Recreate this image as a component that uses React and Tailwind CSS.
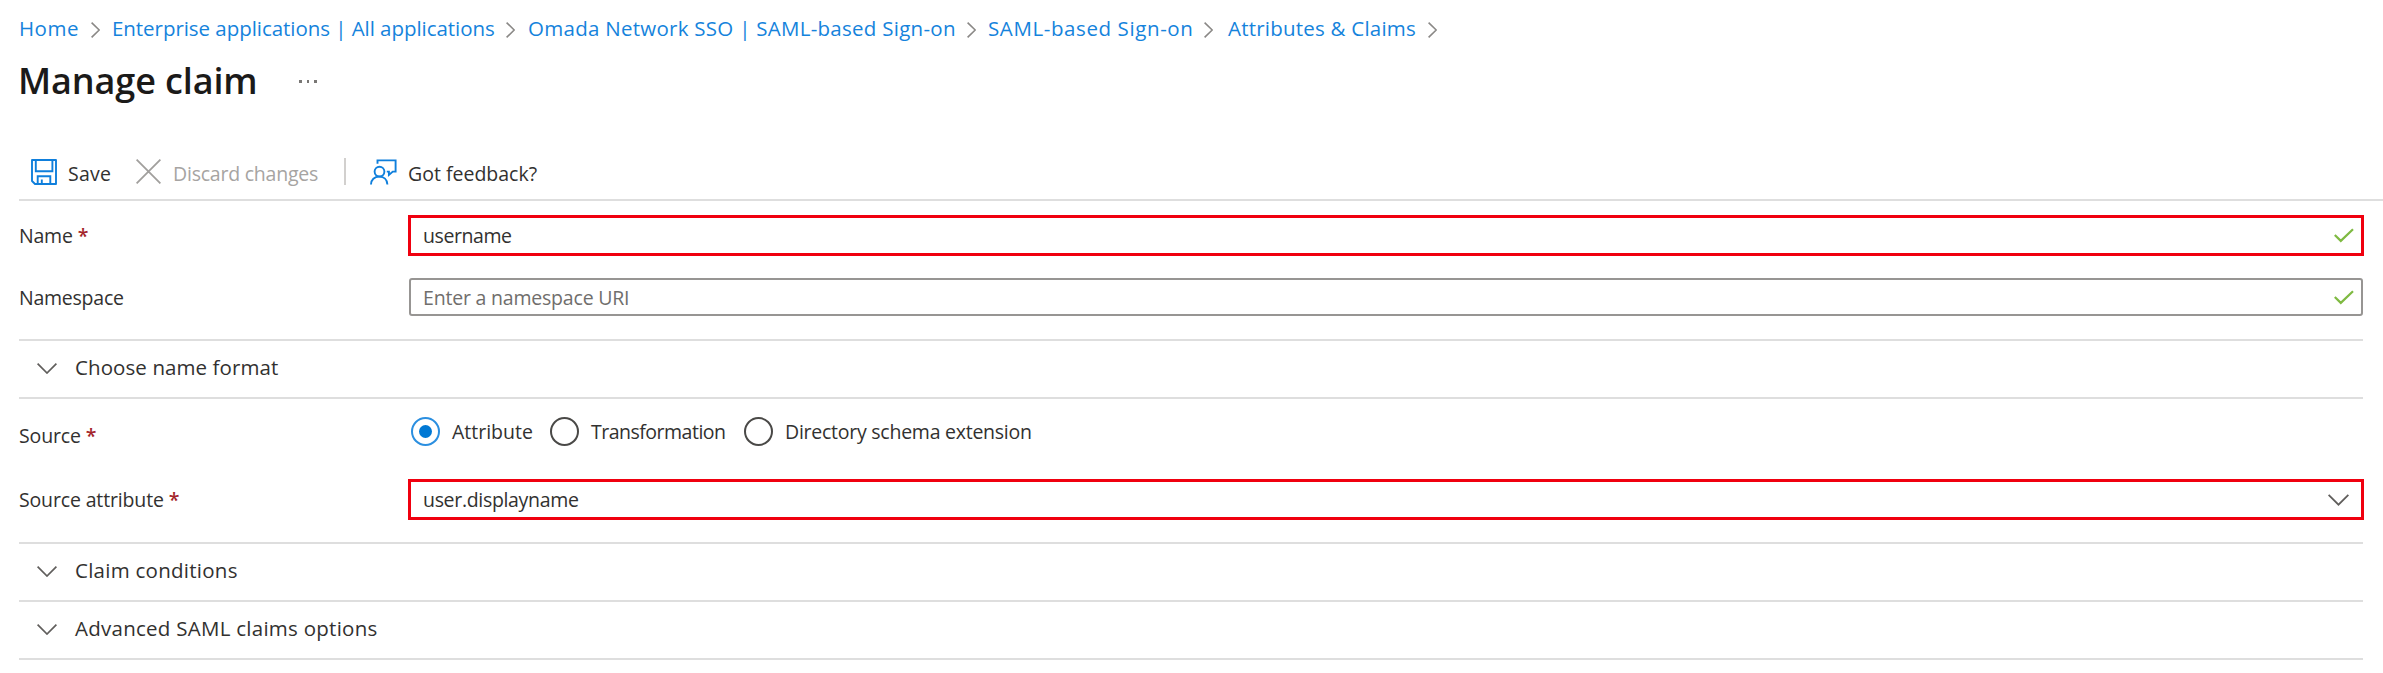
import React from 'react'

const breadcrumbs = [
    { label: 'Home', className: 'w-[59px] tracking-[0.5px]' },
    {
        label: 'Enterprise applications | All applications',
        className: 'w-[381px] tracking-[-0.05px]',
    },
    {
        label: 'Omada Network SSO | SAML-based Sign-on',
        className: 'w-[427px] pl-px tracking-[0.27px]',
    },
    { label: 'SAML-based Sign-on', className: 'w-[203px] tracking-[0.6px]' },
    {
        label: 'Attributes & Claims',
        className: 'w-[190px] pl-[3px] tracking-[0.22px]',
    },
]

const sources = [
    {
        label: 'Attribute',
        className: 'w-[98px] tracking-[0px]',
        checked: true,
    },
    { label: 'Transformation', className: 'w-[153px] tracking-[-0.5px]' },
    {
        label: 'Directory schema extension',
        className: 'tracking-[-0.25px]',
    },
]

const Chevron = ({ className }) => (
    <svg
        className={className}
        viewBox="0 0 20 11"
        fill="none"
        stroke="currentColor"
        strokeWidth="1.7"
    >
        <path d="M0.6 0.7L10 10L19.4 0.7" />
    </svg>
)

const Check = () => (
    <svg
        className="h-[15px] w-[20px] text-[#7fba42]"
        viewBox="0 0 20 15"
        fill="none"
        stroke="currentColor"
        strokeWidth="2.2"
    >
        <path d="M0.8 7L6.8 12.9L19 1.2" />
    </svg>
)

const SaveIcon = () => (
    <svg
        className="h-[26px] w-[26px] text-[#0f7fdc]"
        viewBox="0 0 26 26"
        fill="none"
        stroke="currentColor"
        strokeWidth="1.9"
    >
        <path d="M1 1H25V25H4L1 22Z" strokeLinejoin="round" />
        <path d="M4.8 1V12.2H21.4V1" />
        <path d="M6.7 25V17.2H19.3V25" />
        <path d="M10.8 20.5V25" />
    </svg>
)

const FeedbackIcon = () => (
    <svg
        className="h-[26px] w-[27px] text-[#0f7fdc]"
        viewBox="0 0 27 26"
        fill="none"
        stroke="currentColor"
        strokeWidth="1.9"
    >
        <circle cx="9.5" cy="12.6" r="4.9" />
        <path d="M1 25.5C1 20.8 4.5 17.6 9.2 17.6S17.2 20.8 17.4 25.5" />
        <path d="M7.5 4.8V1.4H25.6V12.6H22.8L18.9 16V12.6H16.8" />
    </svg>
)

const Divider = () => <div className="h-[2px] bg-[#dedede]" />

const FieldLabel = ({ children, required, className = '' }) => (
    <div className={`w-[389px] shrink-0 ${className}`}>
        {children}
        {required && (
            <span className="ml-[5px] font-semibold tracking-normal text-[#a4262c]">
                *
            </span>
        )}
    </div>
)

const Section = ({ title, className }) => (
    <div className="flex h-[56px] items-center pl-[18px]">
        <Chevron className="mb-px h-[11px] w-[20px] text-[#605e5c]" />
        <span className={`ml-[18px] pb-[4px] text-[20.5px] ${className}`}>
            {title}
        </span>
    </div>
)

const App = () => {
    return (
        <div className="h-[673px] w-[2383px] overflow-hidden bg-white pl-[19px] font-['Open_Sans',sans-serif] text-[19.5px] leading-[28px] whitespace-nowrap text-[#323130]">
            <nav className="flex h-[56px] items-center text-[20.5px] text-[#1583dc]">
                {breadcrumbs.map((crumb) => (
                    <React.Fragment key={crumb.label}>
                        <a className={crumb.className}>{crumb.label}</a>
                        <svg
                            className="mr-[12px] ml-[13px] h-[16px] w-[9px] translate-y-[2px] text-[#8a8886]"
                            viewBox="0 0 9 16"
                            fill="none"
                            stroke="currentColor"
                            strokeWidth="1.6"
                        >
                            <path d="M0.6 0.6L8.2 8L0.6 15.4" />
                        </svg>
                    </React.Fragment>
                ))}
            </nav>

            <div className="flex h-[46px] items-center">
                <h1 className="w-[280px] -translate-x-px pt-[3px] text-[36px] font-semibold tracking-[-0.12px] text-[#1b1a19]">
                    Manage claim
                </h1>
                <div className="mt-[4px] flex gap-[5px]">
                    <span className="h-[3px] w-[2.5px] bg-[#797775]" />
                    <span className="h-[3px] w-[2.5px] bg-[#797775]" />
                    <span className="h-[3px] w-[2.5px] bg-[#797775]" />
                </div>
            </div>

            {/* Command bar */}
            <div className="mt-[46px] flex h-[47px] items-center pl-[12px]">
                <SaveIcon />
                <span className="ml-[11px] w-[68px] pt-[4px] tracking-[0.24px]">
                    Save
                </span>
                <svg
                    className="h-[25px] w-[25px] text-[#a19f9d]"
                    viewBox="0 0 25 25"
                    fill="none"
                    stroke="currentColor"
                    strokeWidth="1.8"
                >
                    <path d="M0.6 0.6L24.4 24.4M24.4 0.6L0.6 24.4" />
                </svg>
                <span className="ml-[12px] w-[171px] pt-[4px] tracking-[-0.22px] text-[#a6a4a2]">
                    Discard changes
                </span>
                <div className="mr-[24px] h-[27px] w-[2px] bg-[#d2d0ce]" />
                <FeedbackIcon />
                <span className="ml-[11px] pt-[4px]">Got feedback?</span>
            </div>
            <div className="h-[4px]" />
            <Divider />

            <div className="mr-[19px]">
                <div className="mt-[14px] flex h-[41px] items-center">
                    <FieldLabel
                        required
                        className="pt-px tracking-[-0.2px]"
                    >
                        Name
                    </FieldLabel>
                    <div className="flex h-full flex-1 items-center justify-between border-[3px] border-[#f0000f] pr-[7px] pl-[12px]">
                        <span className="pt-px tracking-[-0.43px]">
                            username
                        </span>
                        <Check />
                    </div>
                </div>

                <div className="mt-[22px] flex h-[38px] items-center">
                    <FieldLabel className="pt-px tracking-[-0.24px]">
                        Namespace
                    </FieldLabel>
                    <div className="mr-px ml-px flex h-full flex-1 items-center justify-between rounded-[3px] border-2 border-[#979593] pr-[7px] pl-[12px]">
                        <span className="pt-px tracking-[-0.2px] text-[#706e6c]">
                            Enter a namespace URI
                        </span>
                        <Check />
                    </div>
                </div>

                <div className="mt-[23px] mr-px">
                    <Divider />
                    <Section
                        title="Choose name format"
                        className="tracking-[0.09px]"
                    />
                    <Divider />
                </div>

                <div className="mt-[17px] flex h-[30px] items-center">
                    <FieldLabel
                        required
                        className="pt-[10px] tracking-[-0.14px]"
                    >
                        Source
                    </FieldLabel>
                    <div className="flex items-center pl-[3px]">
                        {sources.map((source) => (
                            <label
                                key={source.label}
                                className="flex items-center"
                            >
                                <span
                                    className={`flex h-[29px] w-[29px] items-center justify-center rounded-full ${
                                        source.checked
                                            ? 'border-2 border-[#2b8fe0]'
                                            : 'border-2 border-[#4a4947]'
                                    }`}
                                >
                                    {source.checked && (
                                        <span className="h-[13px] w-[13px] rounded-full bg-[#0078d4]" />
                                    )}
                                </span>
                                <span
                                    className={`ml-[12px] pt-[2px] ${source.className}`}
                                >
                                    {source.label}
                                </span>
                            </label>
                        ))}
                    </div>
                </div>

                <div className="mt-[33px] flex h-[41px] items-center">
                    <FieldLabel
                        required
                        className="pt-px tracking-[-0.15px]"
                    >
                        Source attribute
                    </FieldLabel>
                    <div className="flex h-full flex-1 items-center justify-between border-[3px] border-[#f0000f] pr-[12px] pl-[12px]">
                        <span className="pt-px tracking-[-0.32px]">
                            user.displayname
                        </span>
                        <Chevron className="h-[12px] w-[21px] text-[#605e5c]" />
                    </div>
                </div>

                <div className="mt-[22px] mr-px">
                    <Divider />
                    <Section
                        title="Claim conditions"
                        className="tracking-[0.26px]"
                    />
                    <Divider />
                    <Section
                        title="Advanced SAML claims options"
                        className="tracking-[0.26px]"
                    />
                    <Divider />
                </div>
            </div>
        </div>
    )
}

export default App
